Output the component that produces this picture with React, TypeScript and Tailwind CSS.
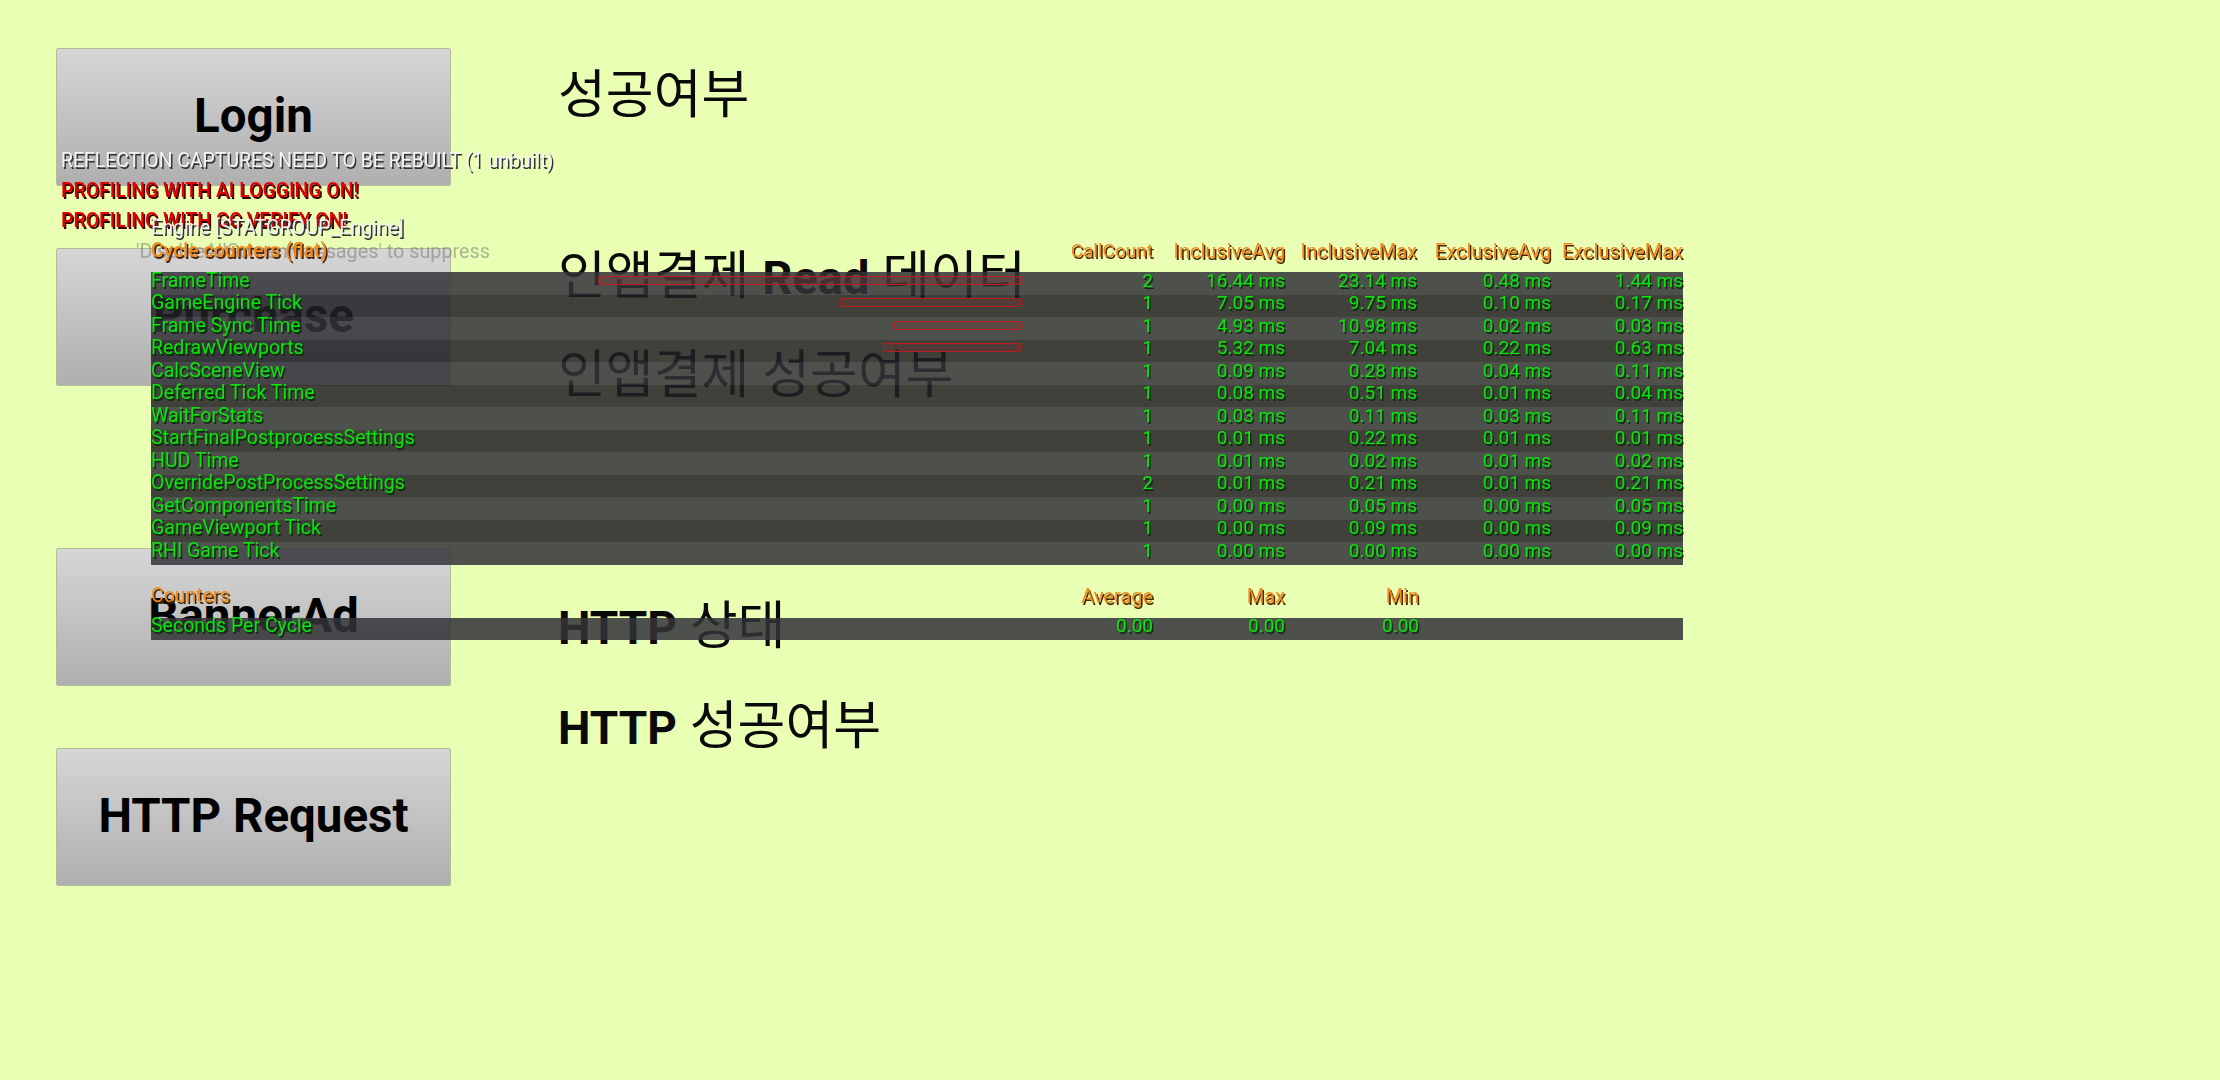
const sans = "font-['Roboto','Noto_Sans_CJK_KR',sans-serif]";

const frameRows = [
  { name: "FrameTime", count: "2", vals: ["16.44 ms", "23.14 ms", "0.48 ms", "1.44 ms"], bar: "w-[423px]" },
  { name: "GameEngine Tick", count: "1", vals: ["7.05 ms", "9.75 ms", "0.10 ms", "0.17 ms"], bar: "w-[181px]" },
  { name: "Frame Sync Time", count: "1", vals: ["4.93 ms", "10.98 ms", "0.02 ms", "0.03 ms"], bar: "w-[127px]" },
  { name: "RedrawViewports", count: "1", vals: ["5.32 ms", "7.04 ms", "0.22 ms", "0.63 ms"], bar: "w-[138px]" },
  { name: "CalcSceneView", count: "1", vals: ["0.09 ms", "0.28 ms", "0.04 ms", "0.11 ms"] },
  { name: "Deferred Tick Time", count: "1", vals: ["0.08 ms", "0.51 ms", "0.01 ms", "0.04 ms"] },
  { name: "WaitForStats", count: "1", vals: ["0.03 ms", "0.11 ms", "0.03 ms", "0.11 ms"] },
  { name: "StartFinalPostprocessSettings", count: "1", vals: ["0.01 ms", "0.22 ms", "0.01 ms", "0.01 ms"] },
  { name: "HUD Time", count: "1", vals: ["0.01 ms", "0.02 ms", "0.01 ms", "0.02 ms"] },
  { name: "OverridePostProcessSettings", count: "2", vals: ["0.01 ms", "0.21 ms", "0.01 ms", "0.21 ms"] },
  { name: "GetComponentsTime", count: "1", vals: ["0.00 ms", "0.05 ms", "0.00 ms", "0.05 ms"] },
  { name: "GameViewport Tick", count: "1", vals: ["0.00 ms", "0.09 ms", "0.00 ms", "0.09 ms"] },
  { name: "RHI Game Tick", count: "1", vals: ["0.00 ms", "0.00 ms", "0.00 ms", "0.00 ms"] },
];

const greenText = "text-[#0be40b] [text-shadow:1.5px_1.5px_0_#0a2a0a]";
const orangeText = "text-[#f08a1c] [text-shadow:1.5px_1.5px_0_#4a2500]";

function GameButton({ label, className }: { label: string; className: string }) {
  return (
    <button
      className={`h-[138px] w-[395px] rounded-[2px] border border-[#b4bb9c] bg-gradient-to-b from-[#d6d6d6] to-[#afafaf] text-[47.5px] font-bold text-black ${className}`}
    >
      {label}
    </button>
  );
}

function Heading({ children, className }: { children: React.ReactNode; className: string }) {
  return <p className={`h-[60px] text-[52px] leading-[60px] text-[#0a0a0a] ${className}`}>{children}</p>;
}

function HeaderCell({ label, className = "w-[132px]" }: { label: string; className?: string }) {
  return <span className={`${className} text-right`}>{label}</span>;
}

function StatRow({ row, dark }: { row: (typeof frameRows)[number]; dark: boolean }) {
  return (
    <div
      className={`flex h-[22.5px] items-center pb-[5px] text-[19px] leading-[22px] ${greenText} ${
        dark ? "bg-[rgba(33,32,36,0.85)]" : "bg-[rgba(50,50,56,0.85)]"
      }`}
    >
      <div className="relative flex-1 whitespace-nowrap">
        <span className="text-[19.5px]">{row.name}</span>
        {row.bar && (
          <span
            className={`absolute right-[132px] top-[6px] h-[9px] rounded-[2px] border-[1.5px] border-[#bc1c1c] bg-[rgba(130,50,50,0.3)] ${row.bar}`}
          />
        )}
        <span className="absolute right-0 top-0">{row.count}</span>
      </div>
      {row.vals.map((v, i) => (
        <span key={i} className={`text-right ${i === 2 ? "w-[134px]" : "w-[132px]"}`}>
          {v}
        </span>
      ))}
    </div>
  );
}

export default function App() {
  return (
    <div className={`relative h-[1080px] w-[2220px] overflow-hidden bg-[#e9ffb4] ${sans}`}>
      <div className="flex pl-[56px]">
        <div className="flex w-[502px] flex-col items-start pt-[48px]">
          <GameButton label="Login" className="" />
          <GameButton label="Purchase" className="mt-[62px]" />
          <GameButton label="BannerAd" className="mt-[162px]" />
          <GameButton label="HTTP Request" className="mt-[62px]" />
        </div>
        <div className="flex flex-col pt-[66px]">
          <Heading className="">성공여부</Heading>
          <Heading className="mt-[121px]">
            인앱결제 <b className="text-[47px]">Read</b> 데이터
          </Heading>
          <Heading className="mt-[39px]">인앱결제 성공여부</Heading>
          <Heading className="mt-[191px]">
            <b className="text-[46px]">HTTP</b> 상태
          </Heading>
          <Heading className="mt-[40px]">
            <b className="text-[46px]">HTTP</b> 성공여부
          </Heading>
        </div>
      </div>

      {/* on-screen engine messages */}
      <div className="absolute left-[61px] top-[150px] blur-[0.4px]">
        <p className="h-[30px] whitespace-nowrap text-[19.4px] leading-[22px] text-[#f4f4f4] [text-shadow:1.5px_1.5px_0_#333]">
          REFLECTION CAPTURES NEED TO BE REBUILT (1 unbuilt)
        </p>
        <p className="h-[30px] whitespace-nowrap text-[19.45px] font-medium leading-[22px] text-[#e00000] [text-shadow:1.5px_1.5px_0_#300]">
          PROFILING WITH AI LOGGING ON!
        </p>
        <p className="h-[30px] whitespace-nowrap text-[19.45px] font-medium leading-[22px] text-[#e00000] [text-shadow:1.5px_1.5px_0_#300]">
          PROFILING WITH GC VERIFY ON!
        </p>
      </div>
      <p className="absolute left-[136px] top-[241px] whitespace-nowrap text-[19.8px] leading-[22px] text-[rgba(110,110,110,0.5)] blur-[0.4px]">
        'DisableAllScreenMessages' to suppress
      </p>

      {/* stat overlay */}
      <div className="absolute left-[151px] top-[217px] w-[1532px] blur-[0.4px]">
        <p className="h-[23px] text-[19.7px] leading-[22px] text-[#f0f0f0] [text-shadow:1.5px_1.5px_0_#333]">
          Engine [STATGROUP_Engine]
        </p>
        <div className={`flex h-[32px] items-center pb-[11px] text-[20px] leading-[22px] ${orangeText}`}>
          <span className="flex-1 whitespace-nowrap text-[19.5px] font-medium">Cycle counters (flat)</span>
          <span className="text-right text-[19px]">CallCount</span>
          <HeaderCell label="InclusiveAvg" />
          <HeaderCell label="InclusiveMax" />
          <HeaderCell label="ExclusiveAvg" className="w-[134px]" />
          <HeaderCell label="ExclusiveMax" />
        </div>
        {frameRows.map((row, i) => (
          <StatRow key={row.name} row={row} dark={i % 2 === 1} />
        ))}

        <div className={`mt-[21px] flex h-[32px] items-center pb-[11px] text-[20px] leading-[22px] ${orangeText}`}>
          <span className="flex-1 whitespace-nowrap text-[19.5px]">Counters</span>
          <span className="text-right">Average</span>
          <HeaderCell label="Max" />
          <HeaderCell label="Min" className="w-[134px]" />
          <span className="w-[264px]" />
        </div>
        <div className={`flex h-[22px] items-center bg-[rgba(50,50,56,0.85)] pb-[5px] text-[19px] leading-[22px] ${greenText}`}>
          <span className="flex-1 whitespace-nowrap text-[19.5px]">Seconds Per Cycle</span>
          <span className="text-right">0.00</span>
          <HeaderCell label="0.00" />
          <HeaderCell label="0.00" className="w-[134px]" />
          <span className="w-[264px]" />
        </div>
      </div>
    </div>
  );
}
